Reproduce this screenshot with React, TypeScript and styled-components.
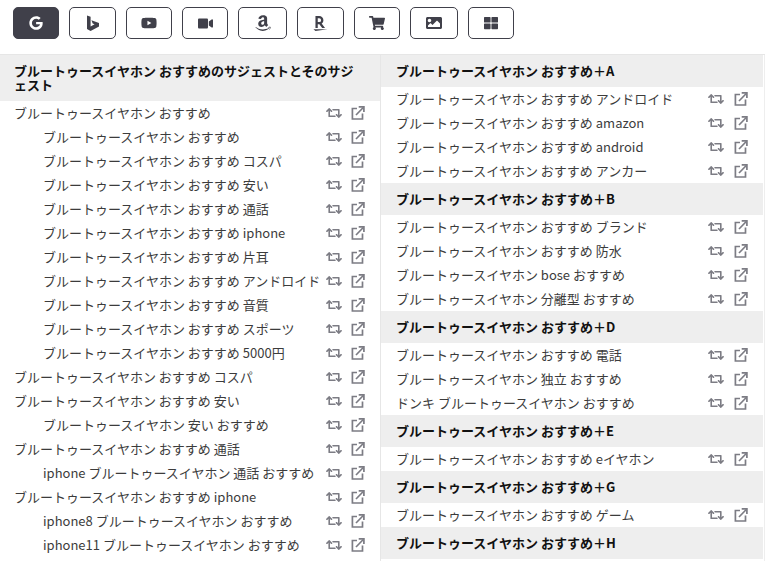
import React from "react";
import styled, { createGlobalStyle } from "styled-components";
import { FaGoogle, FaYoutube, FaVideo, FaAmazon, FaShoppingCart, FaImage, FaThLarge, FaRetweet } from "react-icons/fa";
import { SiRakuten } from "react-icons/si";

const Global = createGlobalStyle`
  html, body { margin: 0; padding: 0; background: #fff; height: 561px; overflow: hidden; }
  body { font-family: "Noto Sans CJK JP", "Noto Sans", sans-serif; color: #3c3c3c; }
`;

const Toolbar = styled.div`
  display: flex;
  gap: 10px;
  padding: 7px 13px 0;
  box-sizing: border-box;
  border-bottom: 1px solid #e6e6e6;
  height: 55px;
`;
const ToolButton = styled.button<{ $active?: boolean; $w: number }>`
  width: ${(p) => p.$w}px;
  height: 32px;
  padding: 0;
  display: flex;
  align-items: center;
  justify-content: center;
  border-radius: 5px;
  border: 1px solid #40404a;
  background: ${(p) => (p.$active ? "#40404a" : "#fff")};
  color: ${(p) => (p.$active ? "#fff" : "#40404a")};
  font-size: 14px;
`;
const Columns = styled.div`
  display: grid;
  grid-template-columns: 381px 382px;
  height: 506px;
  overflow: hidden;
  border-right: 1px solid #eee;
  width: 764px;
`;
const Column = styled.div`
  border-right: 1px solid #e6e6e6;
  &:last-child { border-right: none; }
  overflow: hidden;
  background: #fff;
`;
const Header = styled.div<{ $tall?: boolean }>`
  background: #eeeeee;
  color: #111;
  font-weight: 700;
  font-size: 13px;
  line-height: 14px;
  padding: 9px ${(p) => (p.$tall ? 22 : 15)}px 9px ${(p) => (p.$tall ? 14 : 15)}px;
  height: ${(p) => (p.$tall ? 46 : 32)}px;
  box-sizing: border-box;
`;
const Row = styled.div<{ $indent?: boolean; $right?: boolean }>`
  height: 24px;
  display: flex;
  align-items: center;
  padding-left: ${(p) => (p.$right ? 15 : p.$indent ? 43 : 14)}px;
  padding-right: 15px;
  padding-bottom: 2px;
  box-sizing: border-box;
  font-size: 13px;
  white-space: nowrap;
`;
const RowText = styled.span`
  flex: 1;
  min-width: 0;
`;
const RowIcons = styled.span<{ $gap: number }>`
  display: flex;
  gap: ${(p) => p.$gap}px;
  align-items: center;
  color: #7c7c84;
  transform: translateY(1px);
`;

const Bing = () => (
  <svg width="14" height="16" viewBox="0 0 14 16" fill="currentColor">
    <path d="M1 0.5 4.6 1.8V11.6L8.6 9.3 6.7 8.4 5.4 5.3 13 8V11.6L4.6 16 1 14Z" />
  </svg>
);
const ExternalIcon = () => (
  <svg width="14" height="14" viewBox="0 0 14 14" fill="none" stroke="currentColor" strokeWidth="1.7">
    <path d="M6 2.5H1.4V13H11.5V7.5" />
    <path d="M5 9 12.3 1.5" />
    <path d="M7.7 .9H12.9V6" />
  </svg>
);

const Icons = ({ gap }: { gap: number }) => (
  <RowIcons $gap={gap}>
    <FaRetweet size={16} />
    <ExternalIcon />
  </RowIcons>
);

const B = "ブルートゥースイヤホン";
const K = "おすすめ";
const left: [string, boolean][] = [
  [`${B} ${K}`, false],
  [`${B} ${K}`, true],
  [`${B} ${K} コスパ`, true],
  [`${B} ${K} 安い`, true],
  [`${B} ${K} 通話`, true],
  [`${B} ${K} iphone`, true],
  [`${B} ${K} 片耳`, true],
  [`${B} ${K} アンドロイド`, true],
  [`${B} ${K} 音質`, true],
  [`${B} ${K} スポーツ`, true],
  [`${B} ${K} 5000円`, true],
  [`${B} ${K} コスパ`, false],
  [`${B} ${K} 安い`, false],
  [`${B} 安い ${K}`, true],
  [`${B} ${K} 通話`, false],
  [`iphone ${B} 通話 ${K}`, true],
  [`${B} ${K} iphone`, false],
  [`iphone8 ${B} ${K}`, true],
  [`iphone11 ${B} ${K}`, true],
];
const right: [string, string[]][] = [
  ["A", [`${B} ${K} アンドロイド`, `${B} ${K} amazon`, `${B} ${K} android`, `${B} ${K} アンカー`]],
  ["B", [`${B} ${K} ブランド`, `${B} ${K} 防水`, `${B} bose ${K}`, `${B} 分離型 ${K}`]],
  ["D", [`${B} ${K} 電話`, `${B} 独立 ${K}`, `ドンキ ${B} ${K}`]],
  ["E", [`${B} ${K} eイヤホン`]],
  ["G", [`${B} ${K} ゲーム`]],
  ["H", []],
];

export default function App() {
  return (
    <>
      <Global />
      <Toolbar>
        <ToolButton $active $w={46}><FaGoogle /></ToolButton>
        <ToolButton $w={47}><Bing /></ToolButton>
        <ToolButton $w={46}><FaYoutube size={16} /></ToolButton>
        <ToolButton $w={46}><FaVideo size={15} /></ToolButton>
        <ToolButton $w={49}><FaAmazon size={18} /></ToolButton>
        <ToolButton $w={47}><SiRakuten size={15} /></ToolButton>
        <ToolButton $w={46}><FaShoppingCart size={16} /></ToolButton>
        <ToolButton $w={48}><FaImage size={16} /></ToolButton>
        <ToolButton $w={46}><FaThLarge size={14} /></ToolButton>
      </Toolbar>
      <Columns>
        <Column>
          <Header $tall>{B} {K}のサジェストとそのサジ<wbr />ェスト</Header>
          {left.map(([t, ind], i) => (
            <Row key={i} $indent={ind}>
              <RowText>{t}</RowText>
              <Icons gap={9} />
            </Row>
          ))}
        </Column>
        <Column>
          {right.map(([l, rows]) => (
            <React.Fragment key={l}>
              <Header>{B} {K}＋{l}</Header>
              {rows.map((t, i) => (
                <Row key={i} $right>
                  <RowText>{t}</RowText>
                  <Icons gap={10} />
                </Row>
              ))}
            </React.Fragment>
          ))}
        </Column>
      </Columns>
    </>
  );
}
